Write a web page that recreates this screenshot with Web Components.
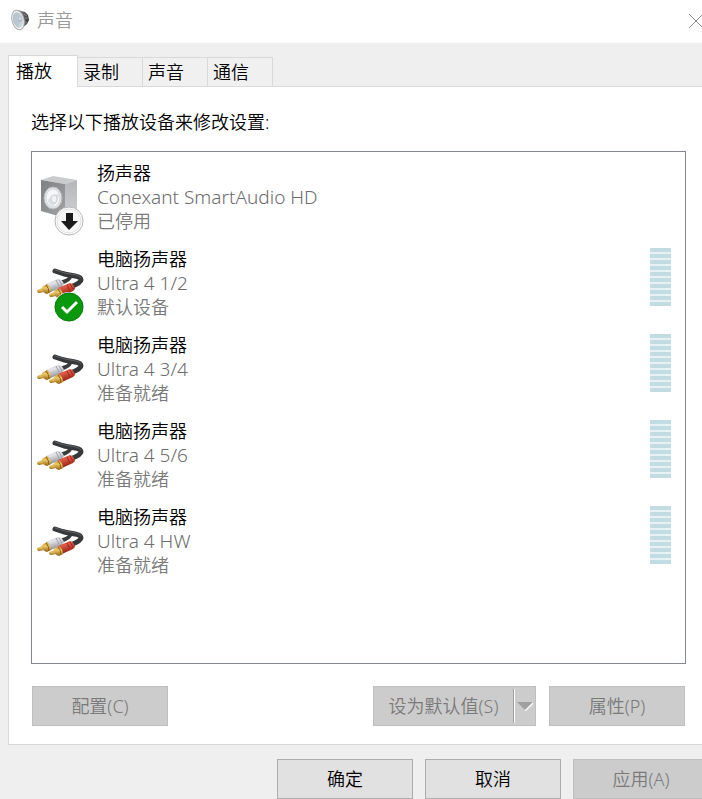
<!DOCTYPE html>
<html lang="zh-CN">
<head>
<meta charset="utf-8">
<title>声音</title>
<style>
    body {
        margin: 0;
        background: #efefef;
        color: #000;
        font: 350 18px/24px "Noto Sans", "Noto Sans CJK SC", sans-serif;
    }
</style>
</head>
<body>
<sound-dialog></sound-dialog>

<script>
class DialogTitle extends HTMLElement {

    constructor() {
        super();
        this.attachShadow({ mode: "open" }).innerHTML = `
        <style>
            :host {
                display: flex;
                align-items: center;
                gap: 7px;
                height: 43px;
                padding-left: 10px;
                background: #fff;
                color: #999;
                overflow: hidden;
            }
            h1 {
                flex: 1;
                margin: 0 0 3px;
                font: inherit;
            }
            svg {
                display: block;
            }
            .logo {
                margin-bottom: 4px;
            }
            button {
                margin: 0 -2px 2px 0;
                padding: 0;
                border: 0;
                background: none;
            }
        </style>
        <svg class="logo" width="20" height="22" viewBox="0 0 20 22" aria-hidden="true">
            <defs>
                <linearGradient id="back"><stop offset="0" stop-color="#999"/><stop offset="1" stop-color="#333"/></linearGradient>
                <linearGradient id="cone" x2="1" y2="1"><stop offset="0" stop-color="#b4c0c8"/><stop offset=".6" stop-color="#bccad3"/><stop offset="1" stop-color="#e2eaee"/></linearGradient>
            </defs>
            <path d="M8 1l7 2 3 3 1 5-2 4-6 5z" fill="url(#back)"/>
            <path d="M14 5l3 2M15 9h3M15 13l2 1" stroke="#888"/>
            <ellipse cx="8" cy="11" rx="6" ry="10" transform="rotate(-14 8 11)" fill="#f4f4f4" stroke="#aaa"/>
            <ellipse cx="8" cy="11" rx="5" ry="8" transform="rotate(-14 8 11)" fill="url(#cone)"/>
            <circle cx="10" cy="11" r="2" fill="#a9bac6"/>
            <circle cx="10" cy="10" r="1" fill="#dfeaf0"/>
        </svg>
        <h1><slot></slot></h1>
        <button type="button" aria-label="关闭">
            <svg width="16" height="16" viewBox="0 0 16 16"><path d="M1 1l14 14M15 1L1 15" stroke="#888" fill="none"/></svg>
        </button>`;
    }
}

class TabStrip extends HTMLElement {

    constructor() {
        super();
        this.attachShadow({ mode: "open" }).innerHTML = `
        <style>
            :host {
                display: flex;
                align-items: flex-end;
                padding: 12px 0 0 8px;
            }
            ::slotted(button) {
                box-sizing: border-box;
                min-width: 65px;
                height: 29px;
                margin: 0;
                padding: 0 20px 0 5px;
                border: 1px solid #d9d9d9;
                border-width: 1px 1px 0 0;
                background: #f0f0f0;
                color: #000;
                font: inherit;
                text-align: left;
            }
            ::slotted(button[aria-selected="true"]) {
                position: relative;
                min-width: 70px;
                height: 32px;
                margin-bottom: -1px;
                padding: 0 20px 2px 7px;
                border-left-width: 1px;
                background: #fff;
            }
        </style>
        <slot></slot>`;
        this.setAttribute("role", "tablist");
    }
}

class PushButton extends HTMLElement {

    connectedCallback() {
        const disabled = this.hasAttribute("disabled") ? "disabled" : "";
        const split = this.hasAttribute("split");
        this.attachShadow({ mode: "open" }).innerHTML = `
        <style>
            :host {
                box-sizing: border-box;
                display: flex;
                flex: none;
                width: ${split ? 163 : 136}px;
                height: 40px;
                border: 1px solid ${disabled ? "#bfbfbf" : "#adadad"};
                background: ${disabled ? "#ccc" : "#e1e1e1"};
            }
            button {
                flex: 1;
                margin: 0;
                padding: 0;
                border: 0;
                background: none;
                color: #000;
                font: inherit;
            }
            button:disabled {
                color: #7a7a7a;
            }
            .more {
                display: flex;
                flex: 0 0 22px;
                align-items: center;
                justify-content: center;
                margin: 2px 0;
                border-left: 1px solid #a0a0a0;
                box-shadow: inset 1px 0 #fff;
            }
        </style>
        <button type="button" ${disabled}><slot></slot></button>
        ${split ? `<button class="more" type="button" aria-label="更多" ${disabled}>
            <svg width="16" height="10" viewBox="0 0 16 10"><path d="M8 9.500L16 1.500" stroke="#fff" stroke-width="2"/><path d="M0 1h16L8 9z" fill="#a0a0a0"/></svg>
        </button>` : ""}`;
    }
}

class LevelMeter extends HTMLElement {

    constructor() {
        super();
        this.attachShadow({ mode: "open" }).innerHTML = `
        <style>
            :host {
                display: flex;
                flex-direction: column;
                gap: 2px;
                width: 21px;
                background: #e8f2f5;
            }
            i {
                height: 4px;
                background: #c1dce2;
            }
        </style>
        ${"<i></i>".repeat(10)}`;
    }
}

const SPEAKER = `
    <defs>
        <linearGradient id="front" x2="1" y2="1"><stop offset="0" stop-color="#7f8082"/><stop offset="1" stop-color="#a2a3a5"/></linearGradient>
        <linearGradient id="side" x2="0" y2="1"><stop offset="0" stop-color="#b4b6ba"/><stop offset="1" stop-color="#cfd0d3"/></linearGradient>
    </defs>
    <path d="M5 7l12-4 24 4-12 4z" fill="#cacbcd"/>
    <path d="M29 11l12-4v31l-12 7z" fill="url(#side)"/>
    <path d="M5 7l24 4v34L5 38z" fill="url(#front)"/>
    <ellipse cx="17" cy="25" rx="9" ry="11" fill="#e4e6e8" stroke="#b4b6b8"/>
    <ellipse cx="17" cy="25" rx="7" ry="9" fill="#f6f7f8" stroke="#d4d6d8"/>
    <path d="M12 29q1-8 11-8-1 9-6 12-3-1-5-4z" fill="#dde0e3"/>
    <ellipse cx="18" cy="26" rx="3" ry="4" fill="#f1f2f3" stroke="#ced1d4"/>`;

const CABLE = `
    <defs>
        <linearGradient id="gold" x2="0" y2="1"><stop offset="0" stop-color="#c28d27"/><stop offset=".4" stop-color="#edc966"/><stop offset="1" stop-color="#94600f"/></linearGradient>
        <linearGradient id="white" x2=".4" y2="1"><stop offset="0" stop-color="#b4b6bb"/><stop offset=".4" stop-color="#e6e6ea"/><stop offset="1" stop-color="#8b8d94"/></linearGradient>
        <linearGradient id="red" x2=".4" y2="1"><stop offset="0" stop-color="#c03a2a"/><stop offset=".4" stop-color="#de5a49"/><stop offset="1" stop-color="#8e1c0d"/></linearGradient>
    </defs>
    <g fill="none" stroke-linecap="round" stroke-linejoin="round">
        <path d="M26 14q8 2 8 4 0 3-10 6" stroke="#3a3b3d" stroke-width="4"/>
        <path d="M19 12l9 3 11 2q6 1 6 4 0 3-11 7" stroke="#37383a" stroke-width="5"/>
        <path d="M19 11l10 3 11 2q4 1 5 3" stroke="#5d5f62"/>
    </g>
    <path d="M1 31l6-2 1 4-5 1q-2 0-2-3z" fill="url(#gold)"/>
    <path d="M10 25l12-5q4 0 6 5l-2 3-11 5q-3-2-5-8z" fill="url(#white)"/>
    <path d="M20 21l3 6M23 21l3 5" stroke="#9c9ea5"/>
    <path d="M6 28l5-3q4 3 4 8l-4 2q-5-1-5-7z" fill="url(#gold)"/>
    <path d="M10 26q3 3 3 8" stroke="#8e5e14" fill="none"/>
    <path d="M13 35l6-2 1 4-5 1q-2 0-2-3z" fill="url(#gold)"/>
    <path d="M22 29l12-5q4 1 5 6l-2 2-11 5q-3-2-4-8z" fill="url(#red)"/>
    <path d="M31 26l3 6M34 25l3 5" stroke="#9e2818"/>
    <path d="M18 32l5-3q4 3 4 8l-4 2q-5-1-5-7z" fill="url(#gold)"/>
    <path d="M22 30q3 3 3 8" stroke="#8e5e14" fill="none"/>`;

const BADGES = {
    disabled: `
    <circle cx="33" cy="48" r="14" fill="#fff" stroke="#b5b5b5"/>
    <circle cx="33" cy="48" r="12" fill="#f7f7f7" stroke="#e2e2e2"/>
    <path d="M30 40h7v8h5l-9 9-8-9h5z" fill="#1b1b1b"/>`,
    default: `
    <circle cx="33" cy="48" r="15" fill="#e8f3e8"/>
    <circle cx="33" cy="48" r="14" fill="#0a980d" stroke="#087b0b"/>
    <path d="M26 48l5 5 10-10" stroke="#fff" stroke-width="3" fill="none"/>`
};

class DeviceItem extends HTMLElement {

    connectedCallback() {
        const art = this.getAttribute("icon") === "speaker" ? SPEAKER : CABLE;
        const badge = BADGES[this.getAttribute("badge")] || "";
        this.setAttribute("role", "option");
        this.attachShadow({ mode: "open" }).innerHTML = `
        <style>
            :host {
                display: flex;
                align-items: flex-start;
                height: 86px;
                padding: 0 14px 0 4px;
            }
            svg {
                flex: none;
                margin: 12px 13px 0 0;
            }
            .text {
                flex: 1;
                color: #7a7a7a;
            }
            p {
                margin: 0;
            }
            .name {
                color: #000;
            }
            .driver {
                color: #6c6c6c;
                font-size: 19px;
            }
            level-meter {
                margin-top: 1px;
            }
        </style>
        <svg width="48" height="64" viewBox="0 0 48 64" aria-hidden="true">${art}${badge}</svg>
        <div class="text">
            <p class="name"><slot name="name"></slot></p>
            <p class="driver"><slot name="driver"></slot></p>
            <p><slot name="state"></slot></p>
        </div>
        ${this.hasAttribute("meter") ? "<level-meter></level-meter>" : ""}`;
    }
}

class SoundDialog extends HTMLElement {

    constructor() {
        super();
        this.attachShadow({ mode: "open" }).innerHTML = `
        <style>
            :host {
                display: flex;
                flex-direction: column;
                min-height: 100vh;
                overflow: hidden;
            }
            .page {
                display: flex;
                flex: 1;
                flex-direction: column;
                margin-left: 8px;
                padding: 23px 16px 18px 22px;
                border: 1px solid #d9d9d9;
                border-right: 0;
                background: #fff;
            }
            .hint {
                margin: 0 0 17px;
            }
            .devices {
                flex: 1;
                padding-top: 9px;
                border: 1px solid #828790;
            }
            .actions, .footer {
                display: flex;
                gap: 13px;
            }
            .actions {
                margin: 22px 1px 0;
            }
            .actions :first-child {
                margin-right: auto;
            }
            .footer {
                gap: 12px;
                justify-content: flex-end;
                margin-right: -7px;
                padding-top: 14px;
            }
        </style>
        <dialog-title>声音</dialog-title>
        <tab-strip>
            <button type="button" role="tab" aria-selected="true">播放</button>
            <button type="button" role="tab">录制</button>
            <button type="button" role="tab">声音</button>
            <button type="button" role="tab">通信</button>
        </tab-strip>
        <section class="page" role="tabpanel">
            <p class="hint" id="hint">选择以下播放设备来修改设置:</p>
            <div class="devices" role="listbox" aria-labelledby="hint">
                <device-item icon="speaker" badge="disabled">
                    <span slot="name">扬声器</span>
                    <span slot="driver">Conexant SmartAudio HD</span>
                    <span slot="state">已停用</span>
                </device-item>
                <device-item badge="default" meter>
                    <span slot="name">电脑扬声器</span>
                    <span slot="driver">Ultra 4 1/2</span>
                    <span slot="state">默认设备</span>
                </device-item>
                <device-item meter>
                    <span slot="name">电脑扬声器</span>
                    <span slot="driver">Ultra 4 3/4</span>
                    <span slot="state">准备就绪</span>
                </device-item>
                <device-item meter>
                    <span slot="name">电脑扬声器</span>
                    <span slot="driver">Ultra 4 5/6</span>
                    <span slot="state">准备就绪</span>
                </device-item>
                <device-item meter>
                    <span slot="name">电脑扬声器</span>
                    <span slot="driver">Ultra 4 HW</span>
                    <span slot="state">准备就绪</span>
                </device-item>
            </div>
            <div class="actions">
                <push-button disabled>配置(C)</push-button>
                <push-button disabled split>设为默认值(S)</push-button>
                <push-button disabled>属性(P)</push-button>
            </div>
        </section>
        <div class="footer">
            <push-button>确定</push-button>
            <push-button>取消</push-button>
            <push-button disabled>应用(A)</push-button>
        </div>`;
    }
}

customElements.define("dialog-title", DialogTitle);
customElements.define("tab-strip", TabStrip);
customElements.define("push-button", PushButton);
customElements.define("level-meter", LevelMeter);
customElements.define("device-item", DeviceItem);
customElements.define("sound-dialog", SoundDialog);
</script>
</body>
</html>
